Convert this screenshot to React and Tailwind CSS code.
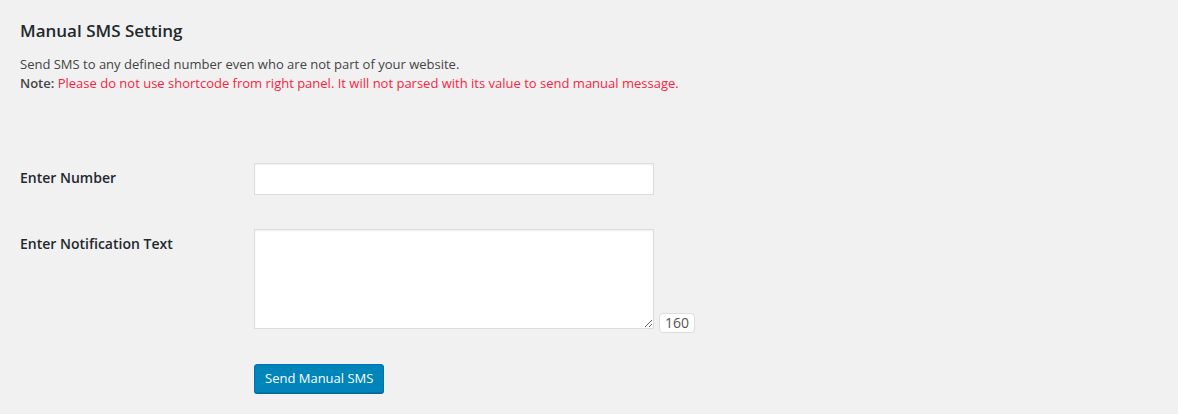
// Manual SMS setting panel — WordPress admin style

const font = { fontFamily: '"Open Sans", "Noto Sans", sans-serif' };

const Row = ({ label, children, className = '' }) => (
  <div className={`flex ${className}`}>
    <div className="-mt-[2px] w-[234px] shrink-0 text-[14px] font-semibold text-[#23282d] leading-[1.3]">{label}</div>
    <div className="flex items-end">{children}</div>
  </div>
);

export default function App() {
  return (
    <div style={font} className="min-h-[414px] w-full bg-[#f1f1f1] px-5 pt-[20px] text-[13px] text-[#444]">
      <h2 className="text-[17px] font-semibold leading-[22px] text-[#23282d]">Manual SMS Setting</h2>
      <p className="mt-[13px] leading-[19px]">Send SMS to any defined number even who are not part of your website.</p>
      <p className="leading-[19px]">
        <strong className="font-semibold">Note:</strong>{' '}
        <span className="text-[#fa2343]">Please do not use shortcode from right panel. It will not parsed with its value to send manual message.</span>
      </p>

      <Row label="Enter Number" className="mt-[78px]">
        <input
          type="text"
          className="-mt-[8px] h-[32px] w-[400px] border border-[#ddd] bg-white shadow-[inset_0_1px_2px_rgba(0,0,0,0.07)] outline-none"
        />
      </Row>

      <Row label="Enter Notification Text" className="mt-[42px]">
        <textarea
          className="-mt-[8px] block h-[100px] w-[400px] resize-y border border-[#ddd] bg-white shadow-[inset_0_1px_2px_rgba(0,0,0,0.07)] outline-none"
        />
        <span className="mb-[-4px] ml-[5px] rounded-[4px] border border-[#ddd] bg-white px-[5px] text-[14px] leading-[18px] text-[#555]">160</span>
      </Row>

      <div className="mt-[35px] pl-[234px]">
        <button className="h-[29px] rounded-[3px] border border-[#0073aa] bg-[#0085ba] px-[10px] text-[13px] leading-[25px] text-white shadow-[0_1px_0_#006799]">
          Send Manual SMS
        </button>
      </div>
    </div>
  );
}
